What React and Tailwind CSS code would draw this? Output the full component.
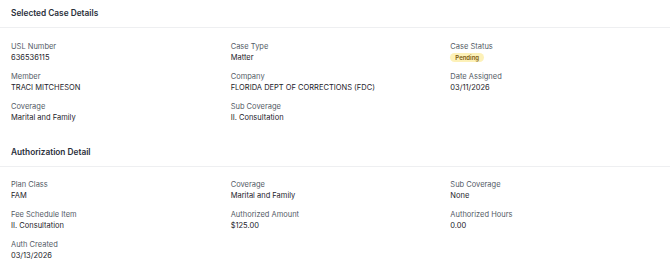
import React from "react";

const Field = ({ label, value, badge }) => (
  <div className="flex flex-col">
    <span className="h-[10px] leading-[10px] text-[7.5px] text-[#545b66]">{label}</span>
    {badge ? (
      <span className="mt-[1px] h-[9px] self-start rounded-full bg-[#fdf1b8] px-[5px] text-[6px] leading-[9px] font-semibold text-[#7c5a12]">
        {value}
      </span>
    ) : (
      <span className="h-[10px] leading-[10px] pt-[1px] text-[7.5px] text-[#1d222a]">{value}</span>
    )}
  </div>
);

const Section = ({ title, fields, top }) => (
  <section>
    <div className="h-[28px] flex items-center pl-[11px] border-b border-[#eeeff1]">
      <h2 className="text-[8.3px] font-semibold text-[#2a303b]">{title}</h2>
    </div>
    <div className={`grid grid-cols-3 gap-y-[10px] pl-[11px] pb-[17px] ${top}`}>
      {fields.map((f) => (
        <Field key={f.label} {...f} />
      ))}
    </div>
  </section>
);

const caseFields = [
  { label: "USL Number", value: "636536115" },
  { label: "Case Type", value: "Matter" },
  { label: "Case Status", value: "Pending", badge: true },
  { label: "Member", value: "TRACI MITCHESON" },
  { label: "Company", value: "FLORIDA DEPT OF CORRECTIONS (FDC)" },
  { label: "Date Assigned", value: "03/11/2026" },
  { label: "Coverage", value: "Marital and Family" },
  { label: "Sub Coverage", value: "II. Consultation" },
];

const authFields = [
  { label: "Plan Class", value: "FAM" },
  { label: "Coverage", value: "Marital and Family" },
  { label: "Sub Coverage", value: "None" },
  { label: "Fee Schedule Item", value: "II. Consultation" },
  { label: "Authorized Amount", value: "$125.00" },
  { label: "Authorized Hours", value: "0.00" },
  { label: "Auth Created", value: "03/13/2026" },
];

export default function App() {
  return (
    <div
      className="w-[670px] h-[268px] bg-white overflow-hidden"
      style={{ fontFamily: "Inter, 'Liberation Sans', sans-serif" }}
    >
      <Section title="Selected Case Details" fields={caseFields} top="pt-[14px]" />
      <Section title="Authorization Detail" fields={authFields} top="pt-[13px]" />
    </div>
  );
}
